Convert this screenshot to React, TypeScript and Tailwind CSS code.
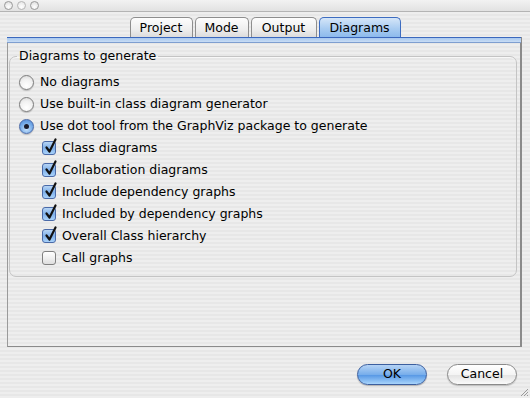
import React from 'react';

const font = 'font-["DejaVu_Sans",sans-serif]';

const Tab: React.FC<{ label: string; width: string; active?: boolean }> = ({ label, width, active }) => (
  <div
    className={
      active
        ? `${width} h-[20px] flex items-center justify-center pt-[1px] rounded-t-[5px] border border-b-0 border-[#3d6cc0] bg-[linear-gradient(to_bottom,#d5e6f8,#a9ccf1_55%,#8dbaec)] text-[12.5px] text-black`
        : `${width} h-[20px] flex items-center justify-center pt-[1px] rounded-t-[5px] border border-b-0 border-[#8e8e8e] bg-[linear-gradient(to_bottom,#fdfdfd,#eeeeee_60%,#dcdcdc)] text-[12.5px] text-black`
    }
  >
    {label}
  </div>
);

const Radio: React.FC<{ checked?: boolean; label: string }> = ({ checked, label }) => (
  <div className="h-[22px] flex items-center pl-[9px]">
    <div
      className={
        checked
          ? 'w-[15px] h-[15px] rounded-full border border-[#4a6aa8] bg-[radial-gradient(circle_at_50%_70%,#c7e2fb,#6fa6e6_60%,#4f86d4)] flex items-center justify-center shadow-[0_1px_1px_rgba(0,0,0,0.2)]'
          : 'w-[15px] h-[15px] rounded-full border border-[#7d7d7d] bg-[radial-gradient(circle_at_50%_75%,#ffffff,#f1f1f1_55%,#d4d4d4)] shadow-[0_1px_1px_rgba(0,0,0,0.2)]'
      }
    >
      {checked && <div className="w-[5px] h-[5px] rounded-full bg-[#1b1b2a]" />}
    </div>
    <span className="ml-[6px] text-[12.5px] text-black">{label}</span>
  </div>
);

const Check: React.FC<{ checked?: boolean; label: string }> = ({ checked, label }) => (
  <div className="h-[22px] flex items-center pl-[32px]">
    <div
      className={
        checked
          ? 'relative w-[14px] h-[14px] rounded-[3px] border border-[#4a6aa8] bg-[linear-gradient(to_bottom,#b7d5f5,#7fb0ea_50%,#a9d2fa)]'
          : 'relative w-[14px] h-[14px] rounded-[3px] border border-[#808080] bg-[linear-gradient(to_bottom,#ffffff,#f0f0f0_50%,#dedede)]'
      }
    >
      {checked && (
        <svg className="absolute left-[1px] top-[-4px]" width="14" height="16" viewBox="0 0 14 16">
          <path d="M2.5 9.5 L5.5 13.5 L11.5 1.5" fill="none" stroke="#111" strokeWidth="2.2" strokeLinecap="round" strokeLinejoin="round" />
        </svg>
      )}
    </div>
    <span className="ml-[6px] text-[12.5px] text-black">{label}</span>
  </div>
);

export default function App() {
  return (
    <div
      className={`${font} w-[530px] h-[398px] flex flex-col relative overflow-hidden bg-[repeating-linear-gradient(to_bottom,#eeeeee_0px,#eeeeee_2px,#e7e7e7_2px,#e7e7e7_4px)]`}
    >
      {/* title bar */}
      <div className="h-[12px] flex items-center gap-[4px] pl-[4px] border-b border-[#b4b4b4] bg-[linear-gradient(to_bottom,#f2f2f2,#e2e2e2)]">
        <div className="w-[9px] h-[9px] rounded-full border border-[#9a9a9a] bg-[radial-gradient(circle_at_50%_70%,#ffffff,#dadada)]" />
        <div className="w-[9px] h-[9px] rounded-full border border-[#b5b5b5] bg-[radial-gradient(circle_at_50%_70%,#ffffff,#e2e2e2)]" />
        <div className="w-[9px] h-[9px] rounded-full border border-[#9a9a9a] bg-[radial-gradient(circle_at_50%_70%,#ffffff,#dadada)]" />
      </div>

      {/* tabs */}
      <div className="mt-[5px] flex justify-center gap-[2px]">
        <Tab label="Project" width="w-[63px]" />
        <Tab label="Mode" width="w-[54px]" />
        <Tab label="Output" width="w-[66px]" />
        <Tab label="Diagrams" width="w-[82px]" active />
      </div>

      {/* panel */}
      <div className="mx-[7px] mr-[8px] h-[310px] flex flex-col border-l border-r-2 border-b border-l-[#9a9a9a] border-r-[#8a8a8a] border-b-[#8a8a8a]">
        <div className="h-[6px] -mx-[1px] border-t border-[#3b68bd] bg-[linear-gradient(to_bottom,#a8c8ef,#c9ddf5)] border-b border-b-[#7f9fd0]" />
        <div className="pt-[5px] pl-[1px] pr-[3px]">
          <fieldset className="rounded-[7px] border border-[#c4c4c4] shadow-[inset_0_1px_0_rgba(255,255,255,0.6)] pb-[7px]">
            <legend className="ml-[7px] px-[2px] text-[12.5px] leading-[16px] text-black">Diagrams to generate</legend>
            <div className="pt-[7px] flex flex-col">
              <Radio label="No diagrams" />
              <Radio label="Use built-in class diagram generator" />
              <Radio label="Use dot tool from the GraphViz package to generate" checked />
              <Check label="Class diagrams" checked />
              <Check label="Collaboration diagrams" checked />
              <Check label="Include dependency graphs" checked />
              <Check label="Included by dependency graphs" checked />
              <Check label="Overall Class hierarchy" checked />
              <Check label="Call graphs" />
            </div>
          </fieldset>
        </div>
      </div>

      {/* buttons */}
      <div className="mt-[17px] flex justify-end gap-[20px] pr-[13px]">
        <button className="w-[70px] h-[21px] rounded-full border border-[#3c5f9f] bg-[linear-gradient(to_bottom,#b5d3f5,#78aeeb_50%,#5a9ae6_55%,#a8d4fb)] text-[12.5px] text-black shadow-[0_1px_1px_rgba(0,0,0,0.25)]">
          OK
        </button>
        <button className="w-[70px] h-[21px] rounded-full border border-[#8a8a8a] bg-[linear-gradient(to_bottom,#ffffff,#f4f4f4_50%,#e4e4e4_55%,#fafafa)] text-[12.5px] text-black shadow-[0_1px_1px_rgba(0,0,0,0.2)]">
          Cancel
        </button>
      </div>

      {/* resize grip */}
      <svg className="absolute right-[1px] bottom-[1px]" width="10" height="10" viewBox="0 0 10 10">
        <path d="M9 2 L2 9 M9 5 L5 9 M9 8 L8 9" stroke="#9a9a9a" strokeWidth="1" />
      </svg>
    </div>
  );
}
